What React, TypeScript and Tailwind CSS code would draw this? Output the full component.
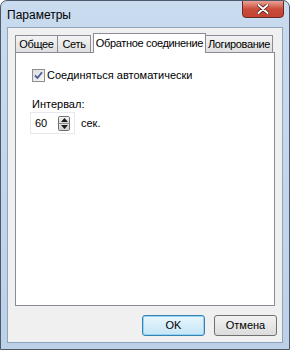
import React from "react";

function Spinner() {
  return (
    <div className="w-[12px] h-[15px] flex flex-col border border-[#707070] rounded-[2px] overflow-hidden">
      <div className="flex-1 flex items-center justify-center bg-gradient-to-b from-[#f2f2f2] to-[#dcdcdc] border-b border-[#8a8a8a]">
        <svg width="7" height="4" viewBox="0 0 7 4"><path d="M0 4 L3.5 0 L7 4 Z" fill="#1a1a1a" /></svg>
      </div>
      <div className="flex-1 flex items-center justify-center bg-gradient-to-b from-[#e6e6e6] to-[#cfcfcf]">
        <svg width="7" height="4" viewBox="0 0 7 4"><path d="M0 0 L3.5 4 L7 0 Z" fill="#1a1a1a" /></svg>
      </div>
    </div>
  );
}

export default function App() {
  return (
    <div
      className="w-[290px] h-[350px] flex flex-col rounded-t-[7px] border border-[#4e5a69] bg-gradient-to-b from-[#c9dbee] to-[#bcd1e8] text-[11px] text-black overflow-hidden whitespace-nowrap"
      style={{ fontFamily: '"Liberation Sans", Arial, sans-serif' }}
    >
      <div className="h-[26px] flex items-start justify-between shrink-0">
        <div className="pl-[6px] pt-[7px] text-[12px] leading-[14px] text-black">Параметры</div>
        <div className="mr-[5px] w-[42px] h-[18px] -mt-[1px] rounded-b-[4px] border border-[#6b2a26] bg-gradient-to-b from-[#e8a294] via-[#cb4b3b] to-[#c2432f] flex items-center justify-center">
          <svg width="12" height="10" viewBox="0 0 12 10">
            <path d="M1.5 1 L10.5 9 M10.5 1 L1.5 9" stroke="#4a1410" strokeWidth="3.4" strokeLinecap="round" />
            <path d="M1.5 1 L10.5 9 M10.5 1 L1.5 9" stroke="#ffffff" strokeWidth="2" strokeLinecap="round" />
          </svg>
        </div>
      </div>
      <div className="flex-1 mx-[6px] mb-[6px] border border-[#8ea3bd] bg-[#f0f0f0] flex flex-col">
        <div className="px-[7px] pt-[5px] flex-1 flex flex-col">
          <div className="flex items-end h-[19px] relative z-10 tracking-[-0.35px]">
            <div className="shrink-0 w-[43px] h-[17px] border border-[#898c95] border-b-0 bg-gradient-to-b from-[#f4f4f4] to-[#e0e0e0] flex items-center justify-center leading-none">Общее</div>
            <div className="shrink-0 w-[33px] h-[17px] border border-[#898c95] border-b-0 border-l-0 bg-gradient-to-b from-[#f4f4f4] to-[#e0e0e0] flex items-center justify-center leading-none">Сеть</div>
            <div className="shrink-0 ml-[2px] w-[113px] h-[20px] border border-[#898c95] border-b-0 bg-white flex items-start justify-center pt-[4px] leading-none -mb-[1px]">Обратное соединение</div>
            <div className="shrink-0 w-[67px] h-[17px] border border-[#898c95] border-b-0 border-l-0 bg-gradient-to-b from-[#f4f4f4] to-[#e0e0e0] flex items-center justify-center leading-none">Логирование</div>
          </div>
          <div className="flex-1 border border-[#898c95] bg-white pl-[16px] pt-[16px] flex flex-col">
            <div className="flex items-center h-[13px]">
              <div className="w-[13px] h-[13px] border border-[#8e8f8f] bg-gradient-to-br from-[#dcdcdc] to-[#f8f8f8] flex items-center justify-center">
                <svg width="9" height="9" viewBox="0 0 9 9">
                  <path d="M1 4.5 L3.5 7 L8 1.2" stroke="#4a5f97" strokeWidth="1.8" fill="none" />
                </svg>
              </div>
              <span className="ml-[2px] leading-none">Соединяться автоматически</span>
            </div>
            <div className="mt-[17px] leading-none">Интервал:</div>
            <div className="mt-[2px] flex items-center">
              <div className="w-[45px] h-[22px] -ml-[2px] border border-[#e3e9ef] flex items-center justify-between pl-[4px] pr-[4px]">
                <span className="leading-none">60</span>
                <Spinner />
              </div>
              <span className="ml-[6px] leading-none">сек.</span>
            </div>
          </div>
        </div>
        <div className="h-[36px] shrink-0 flex items-center justify-end gap-[9px] pr-[5px] pt-[2px]">
          <div className="w-[63px] h-[21px] rounded-[3px] border border-[#3c7fb1] bg-gradient-to-b from-[#eaf6fd] to-[#c4e5f6] shadow-[inset_0_0_0_1px_#8ed5f6] flex items-center justify-center leading-none">OK</div>
          <div className="w-[63px] h-[21px] rounded-[3px] border border-[#707070] bg-gradient-to-b from-[#f2f2f2] to-[#dcdcdc] flex items-center justify-center leading-none">Отмена</div>
        </div>
      </div>
    </div>
  );
}
